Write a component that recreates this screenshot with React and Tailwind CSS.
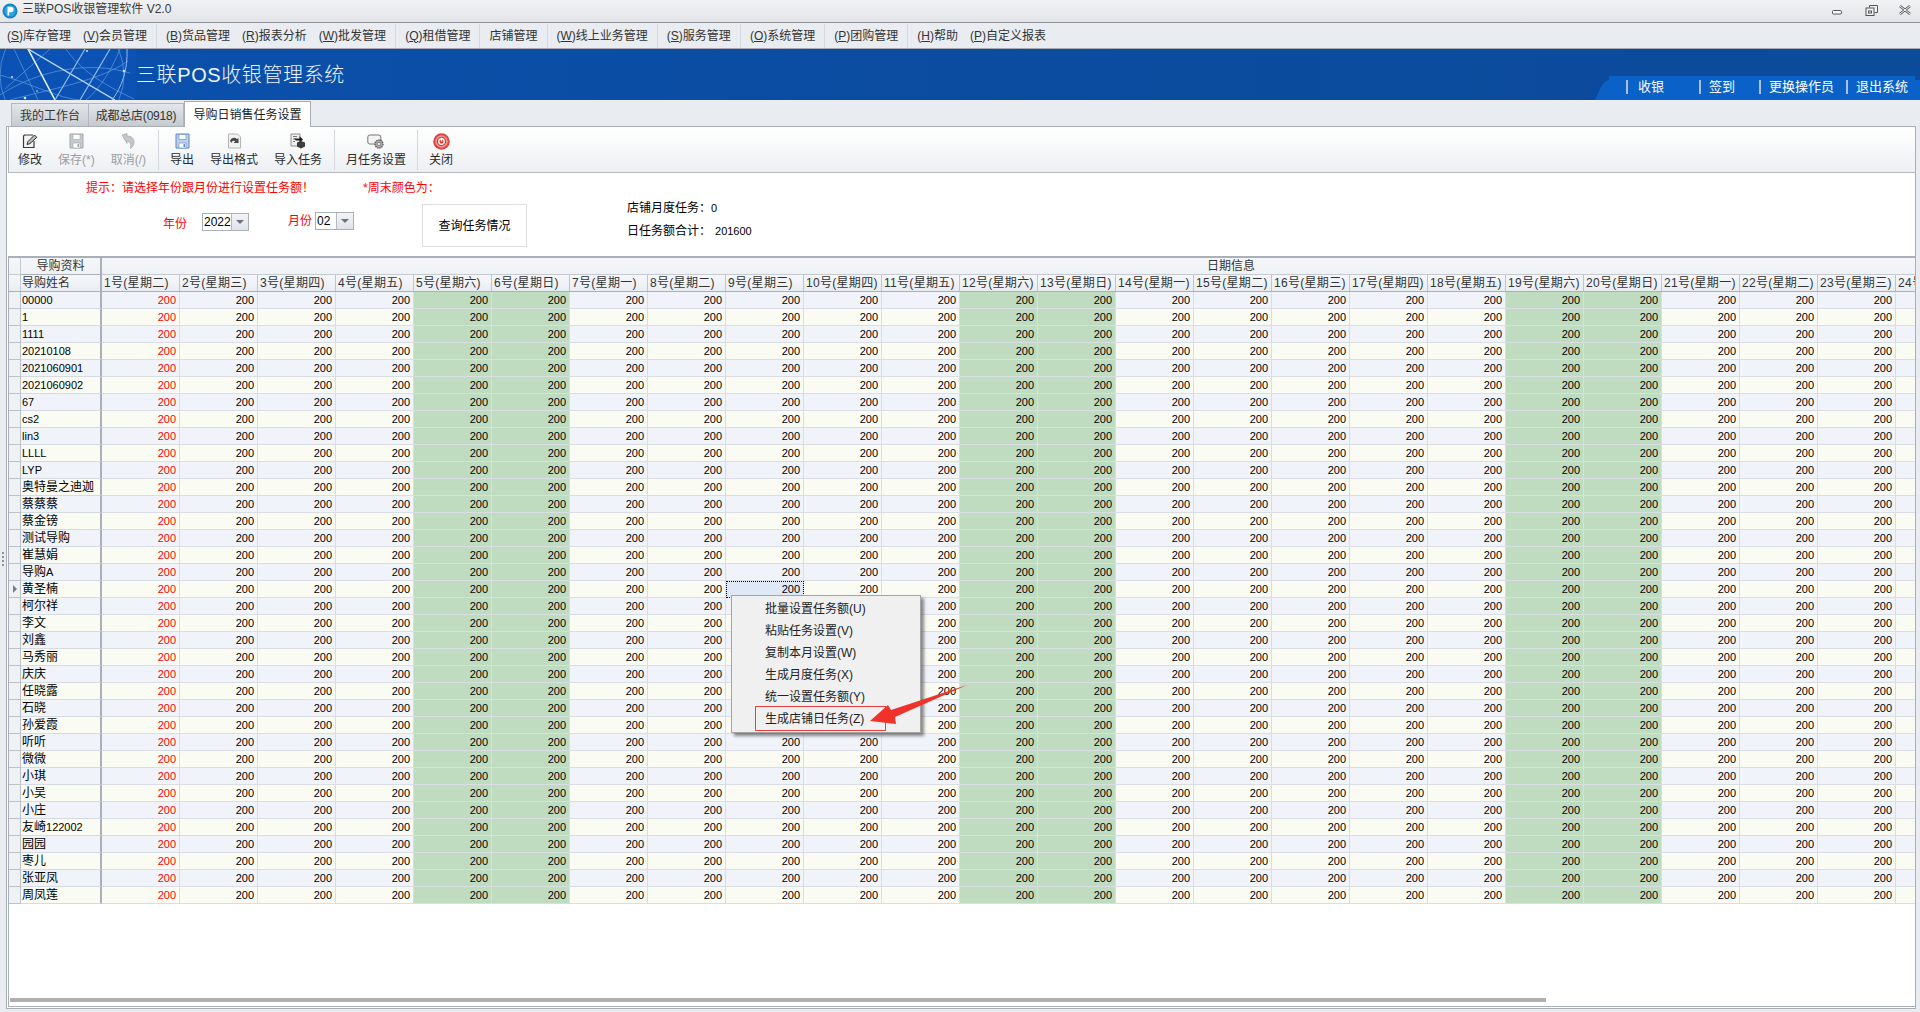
import React from 'react';

const menus = [
  { k: 'S', t: '库存管理' },
  { k: 'V', t: '会员管理', sep: true },
  { k: 'B', t: '货品管理' },
  { k: 'R', t: '报表分析' },
  { k: 'W', t: '批发管理', sep: true },
  { k: 'Q', t: '租借管理', sep: true },
  { t: '店铺管理', sep: true },
  { k: 'W', t: '线上业务管理', sep: true },
  { k: 'S', t: '服务管理', sep: true },
  { k: 'O', t: '系统管理', sep: true },
  { k: 'P', t: '团购管理', sep: true },
  { k: 'H', t: '帮助' },
  { k: 'P', t: '自定义报表' },
];

const names = [
  '00000', '1', '1111', '20210108', '2021060901', '2021060902', '67', 'cs2', 'lin3', 'LLLL', 'LYP',
  '奥特曼之迪迦', '蔡蔡蔡', '蔡金镑', '测试导购', '崔慧娟', '导购A', '黄圣楠', '柯尔祥', '李文', '刘鑫',
  '马秀丽', '庆庆', '任晓露', '石晓', '孙爱霞', '听听', '微微', '小琪', '小吴', '小庄', '友崎122002',
  '园园', '枣儿', '张亚凤', '周凤莲',
];

const week = ['星期二', '星期三', '星期四', '星期五', '星期六', '星期日', '星期一'];
const days = Array.from({ length: 24 }, (_, i) => ({
  day: i + 1,
  label: week[i % 7],
  weekend: i % 7 === 4 || i % 7 === 5,
}));

const popup = ['批量设置任务额(U)', '粘贴任务设置(V)', '复制本月设置(W)', '生成月度任务(X)', '统一设置任务额(Y)', '生成店铺日任务(Z)'];

// latin parts of a name are drawn a bit smaller, the old grid font has half width digits
const Name = ({ value }) => (
  <>
    {value.split(/([A-Za-z0-9]+)/).map((part, i) =>
      /^[A-Za-z0-9]+$/.test(part) ? <span key={i} className="text-[11px]">{part}</span> : part
    )}
  </>
);

const Sep = () => <div className="w-px h-[24px] bg-[#d6d9de] mx-[3px] shrink-0" />;
const ToolSep = ({ ml }) => <div className={`w-px h-[40px] bg-[#d3d6db] self-center shrink-0 ${ml}`} />;

const ToolItem = ({ icon, label, disabled, ml }) => (
  <div className={`flex flex-col items-center shrink-0 ${ml} ${disabled ? 'text-[#9a9ea3]' : 'text-[#2a2a2a]'}`}>
    <div className="h-[16px] mt-[6px] flex items-center justify-center">{icon}</div>
    <div className="leading-[16px] mt-[3px] whitespace-nowrap">{label}</div>
  </div>
);

const Floppy = ({ color, fill }) => (
  <svg width="15" height="16" viewBox="0 0 15 16">
    <path d="M1 1h13v14H1z" fill={fill} stroke={color} />
    <path d="M4 1.5h7v5H4z" fill="#fff" stroke={color} strokeWidth="0.6" />
    <path d="M4 10h7v5H4z" fill="#fff" stroke={color} strokeWidth="0.6" />
    <path d="M8.5 11h1.5v3H8.5z" fill={color} />
  </svg>
);

const Select = ({ value, w, ml, mt }) => (
  <div className={`${w} ${ml} ${mt} h-[18px] flex border border-[#a9b0ba] bg-white shrink-0`}>
    <div className="flex-1 pl-[1px] text-black leading-[16px]">{value}</div>
    <div className="w-[17px] border-l border-[#b4bac2] bg-gradient-to-b from-[#f2f4f6] to-[#dfe3e8] flex items-center justify-center">
      <div className="w-0 h-0 border-x-[4px] border-x-transparent border-t-[4px] border-t-[#6d7278]" />
    </div>
  </div>
);

export default function App() {
  return (
    <div
      className="relative w-[1920px] h-[1012px] overflow-hidden flex flex-col bg-[#e9ecf0] text-[12px] text-[#333]"
      style={{ fontFamily: '"Liberation Sans", "Noto Sans CJK SC", sans-serif' }}
    >
      {/* title bar */}
      <div className="h-[23px] shrink-0 flex items-start border-b border-[#8f9296] bg-gradient-to-b from-[#f1f2f4] to-[#e2e4e7]">
        <svg width="16" height="16" viewBox="0 0 16 16" className="ml-[2px] mt-[3px]">
          <circle cx="8" cy="8" r="7.5" fill="#1583c9" />
          <circle cx="8" cy="8" r="5.5" fill="#2ea3dc" />
          <path d="M5.5 12.5V3.8h3.4a2.6 2.6 0 0 1 0 5.4H7.2v3.3z" fill="#fff" />
        </svg>
        <div className="ml-[4px] leading-[18px] text-[#3a3a3a] whitespace-nowrap">三联POS收银管理软件 V2.0</div>
        <div className="ml-auto flex items-start mr-[9px] mt-[5px]">
          <svg width="12" height="10" viewBox="0 0 12 10" className="mr-[22px]">
            <rect x="1.5" y="5.5" width="9" height="3.5" rx="1" fill="#fff" stroke="#555" />
          </svg>
          <svg width="13" height="11" viewBox="0 0 13 11" className="mr-[21px]">
            <path d="M4.5 2.5V.5h8v7h-3" fill="#f2f2f2" stroke="#555" />
            <rect x="1" y="3" width="8" height="7.5" fill="#f2f2f2" stroke="#555" />
            <rect x="3.5" y="6" width="3" height="2" fill="none" stroke="#555" />
          </svg>
          <svg width="12" height="10" viewBox="0 0 12 10">
            <path d="M1 1l10 8M11 1L1 9" stroke="#555" strokeWidth="2.4" />
            <path d="M1 1l10 8M11 1L1 9" stroke="#fff" strokeWidth="1" />
          </svg>
        </div>
      </div>

      {/* menu */}
      <div className="h-[26px] shrink-0 flex items-center pl-[1px] border-b border-[#a8acb2] whitespace-nowrap">
        {menus.map((m, i) => (
          <React.Fragment key={i}>
            <div className="px-[6px] leading-[16px] text-[#333]">
              {m.k && <>(<u>{m.k}</u>)</>}
              {m.t}
            </div>
            {m.sep && <Sep />}
          </React.Fragment>
        ))}
      </div>

      {/* banner */}
      <div className="relative h-[51px] shrink-0 flex items-center bg-gradient-to-r from-[#0a50ad] via-[#0b4ca0] to-[#0c4a9a] overflow-hidden">
        <svg width="136" height="51" viewBox="0 0 136 51" className="shrink-0">
          <rect width="136" height="51" fill="#0b52b4" />
          <g fill="none" stroke="#5f9be0" strokeWidth="0.7">
            <circle cx="62" cy="26" r="62" />
            <path d="M0 46C40 20 90 12 130 24" />
            <path d="M10 51C50 40 100 32 128 12" />
            <path d="M0 26C30 34 60 50 80 51" />
            <path d="M14 0L38 51M50 0L5 40M120 0C112 20 100 40 86 51" />
            <path d="M66 0C80 20 100 34 134 50" />
          </g>
          <path d="M28 0L55 51" stroke="#e8f3ff" strokeWidth="1.6" />
          <path d="M28 0L115 51" stroke="#bcd9f7" strokeWidth="1.4" />
          <path d="M85 0L55 51" stroke="#8fbcec" strokeWidth="1.2" />
          <path d="M110 0L80 51" stroke="#8fbcec" strokeWidth="1.2" />
          <path d="M127 0C128 20 122 38 112 51" stroke="#8fbcec" strokeWidth="1" fill="none" />
          <g fill="#cfe4fb">
            <circle cx="12" cy="28" r="1" />
            <circle cx="25" cy="49" r="1.3" />
            <circle cx="124" cy="22" r="1.3" />
            <circle cx="87" cy="2" r="1" />
            <circle cx="37" cy="42" r="0.8" />
          </g>
        </svg>
        <div className="text-[20px] leading-[28px] tracking-[0.6px] font-light text-[#eef4fb] whitespace-nowrap">三联POS收银管理系统</div>
        <div className="absolute right-0 bottom-0 w-[325px] h-[24px]">
          <svg width="325" height="24" viewBox="0 0 325 24" className="absolute inset-0">
            <path d="M0 24C5 14 8 4 14 4H14V0H320V4H325V24Z" fill="#0a62c8" />
          </svg>
          <div className="relative h-full flex items-center text-white text-[13px] leading-[16px] whitespace-nowrap pb-[2px]">
            <div className="w-[2px] h-[14px] bg-[#aebfdd] ml-[31px]" />
            <div className="ml-[10px]">收银</div>
            <div className="w-[2px] h-[14px] bg-[#aebfdd] ml-[35px]" />
            <div className="ml-[8px]">签到</div>
            <div className="w-[2px] h-[14px] bg-[#aebfdd] ml-[24px]" />
            <div className="ml-[8px]">更换操作员</div>
            <div className="w-[2px] h-[14px] bg-[#aebfdd] ml-[12px]" />
            <div className="ml-[8px]">退出系统</div>
          </div>
        </div>
      </div>

      {/* tabs */}
      <div className="h-[26px] shrink-0 flex items-end pl-[11px] whitespace-nowrap">
        <div className="w-[78px] h-[23px] pt-[2px] flex items-center justify-center border border-b-0 border-[#b2b7be] bg-gradient-to-b from-[#e3e6ea] to-[#c6cbd1] leading-[16px]">我的工作台</div>
        <div className="w-[95px] h-[23px] pt-[2px] flex items-center justify-center border border-b-0 border-l-0 border-[#b2b7be] bg-gradient-to-b from-[#e3e6ea] to-[#c6cbd1] leading-[16px] tracking-[-0.2px]">成都总店(0918)</div>
        <div className="relative w-[127px] h-[26px] -mb-px z-10 flex items-center justify-center border border-b-0 border-[#a9aeb5] bg-white leading-[16px] text-[#222]">导购日销售任务设置</div>
      </div>

      {/* body */}
      <div className="flex-1 flex min-h-0">
        <div className="w-[6px] shrink-0 flex flex-col items-center justify-center gap-[2px] pb-[18px]">
          <div className="w-[2px] h-[2px] bg-[#8d939b]" />
          <div className="w-[2px] h-[2px] bg-[#8d939b]" />
          <div className="w-[2px] h-[2px] bg-[#8d939b]" />
          <div className="w-[2px] h-[2px] bg-[#8d939b]" />
        </div>
        <div className="w-[1910px] h-[883px] shrink-0 flex flex-col border border-[#a9aeb5] bg-white">
          {/* toolbar */}
          <div className="h-[46px] shrink-0 ml-px flex border-b border-l border-[#b4b8bd] bg-gradient-to-b from-white to-[#edf0f3]">
            <ToolItem
              ml="ml-[9px]"
              label="修改"
              icon={
                <svg width="16" height="15" viewBox="0 0 16 15">
                  <path d="M11 1H2.5L1.5 2v11.5h10.5V7" fill="#f4f4f2" stroke="#3a3a3a" strokeWidth="1.2" />
                  <path d="M5 10.5l1-3L12.5 1l2.3 2.3L8 9.6z" fill="#bdbdbd" stroke="#2e2e2e" />
                </svg>
              }
            />
            <ToolItem
              ml="ml-[16px]"
              disabled
              label="保存(*)"
              icon={<Floppy color="#a3a6aa" fill="#c8cbce" />}
            />
            <ToolItem
              ml="ml-[16px]"
              disabled
              label="取消(/)"
              icon={
                <svg width="15" height="16" viewBox="0 0 15 16">
                  <path d="M1 2l5-1.5V3c4 0 7 2 7 6 0 3-1.5 5-3.5 6.5 .8-3.5 0-7-3.5-7.5v2.5z" fill="#c4c6c9" stroke="#a5a8ac" strokeWidth="0.7" />
                </svg>
              }
            />
            <ToolSep ml="ml-[12px]" />
            <ToolItem ml="ml-[11px]" label="导出" icon={<Floppy color="#5c86c4" fill="#bcd0ec" />} />
            <ToolItem
              ml="ml-[16px]"
              label="导出格式"
              icon={
                <svg width="15" height="16" viewBox="0 0 15 16">
                  <path d="M1.5 1h9l3 3v11h-12z" fill="#f1f1ef" stroke="#b5b5b5" />
                  <path d="M3 8c1-3.5 5-4 7-2l1.5-1v5h-5l1.8-1.6C7 7.2 5 7.4 4.5 10z" fill="#4a4a4a" />
                </svg>
              }
            />
            <ToolItem
              ml="ml-[16px]"
              label="导入任务"
              icon={
                <svg width="16" height="16" viewBox="0 0 16 16">
                  <path d="M1 1h9v12H1z" fill="#f1f1ef" stroke="#8d8d8d" />
                  <path d="M3 3.5h4M3 6h3M3 8.5h2" stroke="#777" />
                  <path d="M4 5.5h5.5V3L13 6.5 9.5 10V7.5H6z" fill="#222" />
                  <path d="M7 9.5l4-1.5 4 1.5v4l-4 2-4-2z" fill="#3d3d3d" />
                </svg>
              }
            />
            <ToolSep ml="ml-[12px]" />
            <ToolItem
              ml="ml-[11px]"
              label="月任务设置"
              icon={
                <svg width="18" height="15" viewBox="0 0 18 15">
                  <rect x="0.8" y="1" width="13" height="9" rx="2" fill="#f4f4f4" stroke="#777" />
                  <circle cx="12" cy="10" r="4" fill="#a8a8a8" stroke="#5e5e5e" strokeDasharray="1.4 0.8" strokeWidth="1.4" />
                  <circle cx="12" cy="10" r="1.6" fill="#f4f4f4" stroke="#5e5e5e" strokeWidth="0.6" />
                </svg>
              }
            />
            <ToolSep ml="ml-[11px]" />
            <ToolItem
              ml="ml-[11px]"
              label="关闭"
              icon={
                <svg width="17" height="17" viewBox="0 0 16 16">
                  <circle cx="8" cy="8" r="7.8" fill="#e0443e" />
                  <circle cx="8" cy="8" r="5.8" fill="#f3a09b" />
                  <circle cx="8" cy="8" r="4.4" fill="#d63a35" />
                  <circle cx="8" cy="8" r="2.6" fill="none" stroke="#fff" strokeWidth="1.2" />
                  <path d="M8 4.5v3.5" stroke="#fff" strokeWidth="1.3" />
                </svg>
              }
            />
          </div>

          {/* form */}
          <div className="h-[83px] shrink-0 flex">
            <div className="w-[620px] shrink-0 pt-[7px]">
              <div className="h-[16px] flex pl-[79px] leading-[16px] text-[#ff0000] whitespace-nowrap">
                <div>提示：请选择年份跟月份进行设置任务额！</div>
                <div className="ml-[49px]">*周末颜色为：</div>
              </div>
              <div className="flex items-start mt-[8px] whitespace-nowrap">
                <div className="ml-[156px] mt-[12px] leading-[16px] text-[#ff0000]">年份</div>
                <Select value="2022" w="w-[47px]" ml="ml-[15px]" mt="mt-[9px]" />
                <div className="ml-[39px] mt-[9px] leading-[16px] text-[#ff0000]">月份</div>
                <Select value="02" w="w-[39px]" ml="ml-[3px]" mt="mt-[8px]" />
                <div className="ml-[68px] w-[105px] h-[43px] flex items-center justify-center border border-[#dcdee1] text-black leading-[16px]">查询任务情况</div>
              </div>
            </div>
            <div className="pt-[27px] text-black leading-[16px] whitespace-nowrap">
              <div>店铺月度任务：<span className="text-[11px]">0</span></div>
              <div className="mt-[7px]">日任务额合计：<span className="text-[11px] ml-[4px]">201600</span></div>
            </div>
          </div>

          {/* grid */}
          <div className="flex-1 min-h-0 ml-px flex flex-col border-2 border-l border-b border-r-0 border-[#a9b0ba] overflow-hidden bg-white">
            <div className="w-[2000px] flex-1 min-h-0 text-black whitespace-nowrap">
              <div className="h-[17px] flex bg-gradient-to-b from-[#f5f7fa] to-[#eef1f5] text-[#333] leading-[16px]">
                <div className="w-[12px] shrink-0 border-r border-b border-[#c5cad2]" />
                <div className="w-[81px] shrink-0 text-center border-r-2 border-b border-[#a9b0ba]">导购资料</div>
                <div className="w-[2258px] shrink-0 text-center border-b border-[#c5cad2]">日期信息</div>
              </div>
              <div className="h-[17px] flex bg-gradient-to-b from-[#f5f7fa] to-[#e9edf2] text-[#333] leading-[16px] border-b border-[#a9b0ba]">
                <div className="w-[12px] shrink-0 border-r border-[#c5cad2]" />
                <div className="w-[81px] shrink-0 pl-[1px] border-r-2 border-[#a9b0ba]">导购姓名</div>
                {days.map((d) => (
                  <div key={d.day} className="w-[78px] shrink-0 pl-[2px] border-r border-[#c0c5cc] tracking-[0.3px]">
                    {d.day}号({d.label})
                  </div>
                ))}
              </div>
              {names.map((name, r) => (
                <div key={r} className={`h-[17px] flex leading-[16px] ${r % 2 ? 'bg-[#fafbf3]' : 'bg-[#f0f4fa]'}`}>
                  <div className="w-[12px] shrink-0 flex items-center justify-center bg-[#eef1f6] border-r border-b border-[#bcc2ca]">
                    {r === 17 && <div className="w-0 h-0 border-y-[4px] border-y-transparent border-l-[4px] border-l-[#7a7f86]" />}
                  </div>
                  <div className="w-[81px] shrink-0 pl-[1px] border-r-2 border-r-[#a9b0ba] border-b border-b-[#d6dae1]">
                    <Name value={name} />
                  </div>
                  {days.map((d, c) => {
                    const selected = r === 17 && c === 8;
                    return (
                      <div
                        key={d.day}
                        className={`w-[78px] shrink-0 text-right pr-[3px] text-[11px] border-r border-b border-[#dadde3] ${
                          selected ? 'bg-[#dfe9f6] outline-1 outline-dotted outline-black -outline-offset-1' : d.weekend ? 'bg-[#c0dcc0]' : ''
                        } ${c === 0 ? 'text-[#ff0000]' : ''}`}
                      >
                        200
                      </div>
                    );
                  })}
                </div>
              ))}
            </div>
            <div className="h-[4px] w-[1536px] ml-[1px] mb-[4px] bg-[#b0b0b0] shrink-0" />
          </div>
          <div className="h-[1px] shrink-0" />
        </div>
      </div>
      <div className="h-[3px] shrink-0" />

      {/* right click menu */}
      <div className="absolute left-[731px] top-[595px] w-[190px] h-[138px] pt-[2px] bg-[#f0f0f0] border border-[#a4a4a4] shadow-[3px_3px_3px_rgba(0,0,0,0.45)] text-[#222] whitespace-nowrap">
        {popup.map((p) => (
          <div key={p} className="h-[22px] pl-[33px] leading-[22px]">{p}</div>
        ))}
        <div className="absolute left-[23px] top-[110px] w-[131px] h-[25px] border border-[#e84040]" />
      </div>
      <svg width="110" height="50" viewBox="0 0 110 50" className="absolute left-[865px] top-[682px]">
        <path d="M5 39L23 23 26 28 102 3 30 35 31 42z" fill="#f0322c" />
      </svg>
    </div>
  );
}
